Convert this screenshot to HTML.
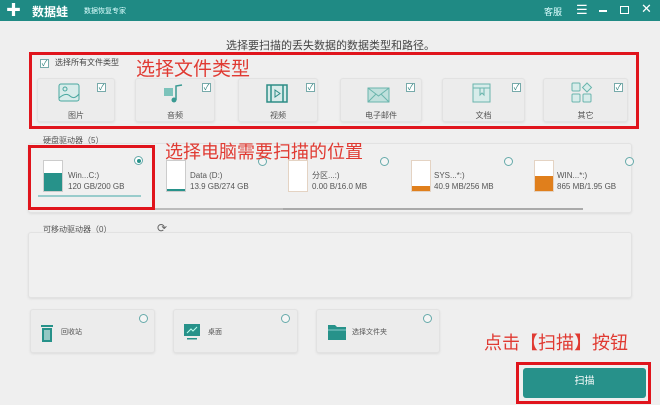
<!DOCTYPE html>
<html><head><meta charset="utf-8"><style>
*{margin:0;padding:0;box-sizing:border-box}
body{width:660px;height:405px;background:#efefef;font-family:"Liberation Sans","Noto Sans CJK SC",sans-serif;position:relative;overflow:hidden;color:#444}
.abs{position:absolute}
.tb{left:0;top:0;width:660px;height:21px;background:#1f8a84}
.card{position:absolute;background:#ececec;border:1px solid #e2e2e2;border-radius:3px;box-shadow:0 1px 2px #ddd}
.cb{position:absolute;width:9px;height:9px;border:1px solid #7aa;background:#fff;font-size:8px;line-height:7px;text-align:center;color:#2a7f7a}
.lbl{position:absolute;font-size:8px;color:#555;width:100%;text-align:center}
.red{position:absolute;border:3px solid #e0141c}
.rt{position:absolute;color:#e03a32;font-family:"Noto Sans CJK SC",sans-serif}
.radio{position:absolute;width:9px;height:9px;border:1px solid #6aa;border-radius:50%;background:#f5f5f5}
.small{font-size:8px;color:#555;line-height:11px}
</style></head><body>
<div class="abs tb"></div>
<div class="abs" style="left:6px;top:4px;width:14px;height:13px;color:#fff;font-size:15px;line-height:13px;font-weight:bold">✚</div>
<div class="abs" style="left:32px;top:3px;color:#fff;font-size:12px;font-weight:bold">数据蛙</div>
<div class="abs" style="left:84px;top:6px;color:#dff;font-size:7px">数据恢复专家</div>
<div class="abs" style="left:544px;top:5px;color:#dff;font-size:9px">客服</div>
<div class="abs" style="left:576px;top:2px;color:#fff;font-size:13px">☰</div>
<div class="abs" style="left:599px;top:10px;width:8px;height:1.5px;background:#fff"></div>
<div class="abs" style="left:620px;top:6px;width:9px;height:8px;border:1.5px solid #fff"></div>
<div class="abs" style="left:641px;top:1px;color:#fff;font-size:13px">✕</div>

<div class="abs" style="left:226px;top:37px;font-size:11px;color:#444">选择要扫描的丢失数据的数据类型和路径。</div>

<div class="cb" style="left:40px;top:59px">✓</div>
<div class="abs" style="left:55px;top:57px;font-size:8px;color:#444">选择所有文件类型</div>

<div class="card" style="left:37px;top:78px;width:78px;height:44px"><svg class="abs" style="left:20px;top:4px" width="22" height="20"><rect x="1" y="1" width="20" height="17" rx="2" fill="#d8ecea" stroke="#4aa8a0"/><circle cx="7" cy="6" r="2" fill="none" stroke="#4aa8a0"/><path d="M1 15 Q8 9 12 13 T21 11" fill="none" stroke="#4aa8a0"/></svg><div class="cb" style="left:59px;top:4px">✓</div><div class="lbl" style="top:31px">图片</div></div>
<div class="card" style="left:135px;top:78px;width:80px;height:44px"><svg class="abs" style="left:27px;top:4px" width="22" height="20"><rect x="1" y="5" width="9" height="8" fill="#7cc3bb"/><path d="M13 17 V3 L19 2" fill="none" stroke="#3a9a92" stroke-width="1.5"/><circle cx="11" cy="17" r="2.5" fill="#3a9a92"/></svg><div class="cb" style="left:66px;top:4px">✓</div><div class="lbl" style="top:31px">音频</div></div>
<div class="card" style="left:238px;top:78px;width:80px;height:44px"><svg class="abs" style="left:27px;top:5px" width="22" height="20"><rect x="1" y="1" width="20" height="17" fill="#d8ecea" stroke="#2e8d86" stroke-width="1.5"/><path d="M5 1V18M17 1V18" stroke="#2e8d86" stroke-width="1.5"/><path d="M9 6 L14 9.5 L9 13Z" fill="none" stroke="#2e8d86"/></svg><div class="cb" style="left:67px;top:4px">✓</div><div class="lbl" style="top:31px">视频</div></div>
<div class="card" style="left:340px;top:78px;width:82px;height:44px"><svg class="abs" style="left:26px;top:4px" width="24" height="20"><rect x="1" y="5" width="21" height="14" fill="#bfe0dc" stroke="#6ab5ad"/><path d="M1 5 L11.5 13 L22 5 M1 19 L9 11 M22 19 L14 11" fill="none" stroke="#6ab5ad"/></svg><div class="cb" style="left:65px;top:4px">✓</div><div class="lbl" style="top:31px">电子邮件</div></div>
<div class="card" style="left:442px;top:78px;width:83px;height:44px"><svg class="abs" style="left:29px;top:4px" width="20" height="20"><rect x="1" y="1" width="17" height="18" fill="#d8ecea" stroke="#6ab5ad"/><path d="M1 5H18M8 5V12L10 10L12 12V5" fill="none" stroke="#6ab5ad"/></svg><div class="cb" style="left:69px;top:4px">✓</div><div class="lbl" style="top:31px">文档</div></div>
<div class="card" style="left:543px;top:78px;width:85px;height:44px"><svg class="abs" style="left:27px;top:3px" width="22" height="22"><rect x="1" y="1" width="8" height="8" rx="1" fill="#d8ecea" stroke="#6ab5ad"/><path d="M16 1L20.5 5.5L16 10L11.5 5.5Z" fill="#d8ecea" stroke="#6ab5ad"/><rect x="1" y="12" width="8" height="8" rx="1" fill="#d8ecea" stroke="#6ab5ad"/><rect x="12" y="12" width="8" height="8" rx="1" fill="#d8ecea" stroke="#6ab5ad"/></svg><div class="cb" style="left:70px;top:4px">✓</div><div class="lbl" style="top:31px">其它</div></div>

<div class="red" style="left:29px;top:52px;width:610px;height:77px"></div>
<div class="rt" style="left:136px;top:56px;font-size:19px;line-height:24px">选择文件类型</div>

<div class="card" style="left:28px;top:143px;width:604px;height:70px;background:#f0f0f0"></div>
<div class="abs" style="left:43px;top:135px;font-size:8px;color:#555">硬盘驱动器（5）</div>
<div class="abs" style="left:38px;top:208px;width:245px;height:2px;background:#bbb"></div>
<div class="abs" style="left:283px;top:208px;width:300px;height:2px;background:#aaa"></div>
<!-- drives -->
<div class="abs" style="left:43px;top:160px;width:20px;height:32px;border:1px solid #ccc;background:#fff"><div class="abs" style="left:0;bottom:0;width:18px;height:18px;background:#27928a"></div></div>
<div class="abs small" style="left:68px;top:170px">Win...C:)<br>120 GB/200 GB</div>
<div class="abs" style="left:38px;top:195px;width:103px;height:1.5px;background:#9cc"></div>
<div class="abs" style="left:134px;top:156px;width:9px;height:9px;border:1px solid #6aa;border-radius:50%;background:#fff"><div style="margin:1.5px;width:4px;height:4px;border-radius:50%;background:#27928a"></div></div>

<div class="abs" style="left:166px;top:160px;width:20px;height:32px;border:1px solid #ccc;background:#fff"><div class="abs" style="left:0;bottom:0;width:18px;height:2px;background:#27928a"></div></div>
<div class="abs small" style="left:190px;top:170px">Data (D:)<br>13.9 GB/274 GB</div>
<div class="radio" style="left:258px;top:157px"></div>
<div class="abs" style="left:288px;top:160px;width:20px;height:32px;border:1px solid #e4d3c3;background:#fff"></div>
<div class="abs small" style="left:312px;top:170px">分区...:)<br>0.00 B/16.0 MB</div>
<div class="radio" style="left:380px;top:157px"></div>
<div class="abs" style="left:411px;top:160px;width:20px;height:32px;border:1px solid #e4d3c3;background:#fff"><div class="abs" style="left:0;bottom:0;width:18px;height:5px;background:#e07f1c"></div></div>
<div class="abs small" style="left:434px;top:170px">SYS...*:)<br>40.9 MB/256 MB</div>
<div class="radio" style="left:504px;top:157px"></div>
<div class="abs" style="left:534px;top:160px;width:20px;height:32px;border:1px solid #e4d3c3;background:#fff"><div class="abs" style="left:0;bottom:0;width:18px;height:15px;background:#e07f1c"></div></div>
<div class="abs small" style="left:557px;top:170px">WIN...*:)<br>865 MB/1.95 GB</div>
<div class="radio" style="left:625px;top:157px"></div>

<div class="red" style="left:28px;top:145px;width:127px;height:65px"></div>
<div class="rt" style="left:165px;top:139px;font-size:18px;line-height:24px">选择电脑需要扫描的位置</div>

<div class="card" style="left:28px;top:232px;width:604px;height:66px;background:#f0f0f0"></div>
<div class="abs" style="left:43px;top:224px;font-size:8px;color:#555">可移动驱动器（0）</div>
<div class="abs" style="left:157px;top:221px;font-size:12px;color:#666">⟳</div>

<div class="card" style="left:30px;top:309px;width:125px;height:44px"><svg class="abs" style="left:9px;top:13px" width="14" height="20"><rect x="1" y="2" width="12" height="2" fill="#27928a"/><rect x="2" y="5" width="10" height="14" fill="#27928a"/><path d="M5 7V17M7 7V17M9 7V17" stroke="#fff"/></svg><div class="abs" style="left:30px;top:17px;font-size:7px;color:#555">回收站</div><div class="radio" style="left:108px;top:4px"></div></div>
<div class="card" style="left:173px;top:309px;width:125px;height:44px"><svg class="abs" style="left:9px;top:13px" width="18" height="18"><rect x="1" y="1" width="16" height="12" fill="#27928a"/><path d="M4 10L8 6L10 8L14 4" fill="none" stroke="#bfe" /><rect x="4" y="15" width="10" height="1.5" fill="#27928a"/></svg><div class="abs" style="left:34px;top:17px;font-size:7px;color:#555">桌面</div><div class="radio" style="left:107px;top:4px"></div></div>
<div class="card" style="left:316px;top:309px;width:124px;height:44px"><svg class="abs" style="left:10px;top:13px" width="20" height="18"><path d="M1 2H8L10 4H19V17H1Z" fill="#27928a"/><path d="M1 7H19" stroke="#8cc"/></svg><div class="abs" style="left:35px;top:17px;font-size:7px;color:#555">选择文件夹</div><div class="radio" style="left:106px;top:4px"></div></div>

<div class="rt" style="left:484px;top:330px;font-size:18px;line-height:24px">点击【扫描】按钮</div>
<div class="abs" style="left:523px;top:368px;width:123px;height:30px;background:#27918a;border-radius:3px;color:#fff;font-size:10px;text-align:center;line-height:28px">扫描</div>
<div class="red" style="left:516px;top:362px;width:135px;height:42px"></div>
</body></html>
